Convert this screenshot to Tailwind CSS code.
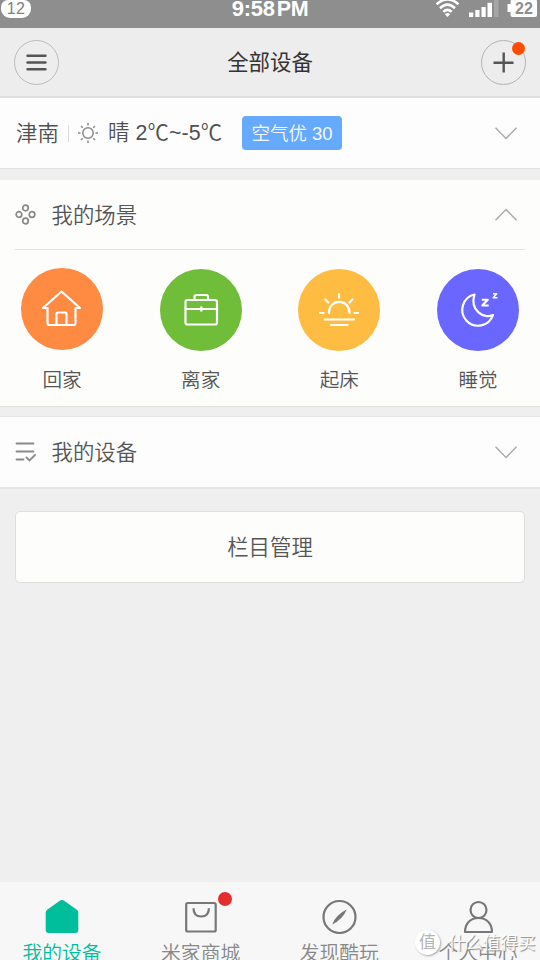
<!DOCTYPE html>
<html lang="zh-CN">
<head>
<meta charset="utf-8">
<title>全部设备</title>
<script src="https://cdn.jsdelivr.net/npm/@tailwindcss/browser@4"></script>
</head>
<body class="h-[960px] w-[540px] overflow-hidden bg-[#efefef] font-['Liberation_Sans','Noto_Sans_CJK_SC',sans-serif] text-[#555]">
<div class="flex h-[960px] flex-col overflow-hidden">
  <div class="relative flex h-7 shrink-0 items-start justify-between bg-[#8e8e8e] text-white">
    <span class="ml-px flex h-[18px] w-[30px] items-center justify-center rounded-b-[9px] rounded-t-[7px] bg-white pb-px text-[16px] leading-none tracking-[0.3px] text-[#808080]">12</span>
    <span class="absolute left-0 top-[-3px] w-full text-center text-[22px] font-bold leading-6"><span class="tracking-[-0.3px]">9:58</span><span class="ml-0.5 text-[21.500px] tracking-[-0.4px]">PM</span></span>
    <svg class="h-7 w-[110px]" viewBox="430 0 110 28" fill="none">
      <g stroke="#fff" stroke-width="2.600"><path d="M436.600 4.200Q447.500-5.400 458.400 4.200M440 8.200Q447.500 1.200 455 8.200M443.300 11.900Q447.500 7.900 451.700 11.900"/></g>
      <path d="M447.500 17l-2.600-2.800q2.600-2.200 5.200 0z" fill="#fff"/>
      <path d="M469 12.500h4.300V17H469zM475.300 10h4.200v7h-4.200zM481.500 7h4.200v10h-4.200zM487.500 2.800h4.500V17h-4.500z" fill="#fff"/>
      <path d="M494 0h4.500v17H494z" fill="#a6a6a6"/>
      <path d="M507.500 4h3V1.500q0-2 2-2H535q2 0 2 2V15q0 2-2 2h-22.500q-2 0-2-2v-3h-3z" fill="#fff"/>
      <text x="524" y="13.700" text-anchor="middle" font-size="16" font-weight="bold" fill="#8e8e8e" font-family="Liberation Sans">22</text>
    </svg>
  </div>

  <header class="flex h-[70px] shrink-0 items-center justify-between border-b-2 border-[#dedee0] bg-[#ededed] px-3.5">
    <div class="flex size-[45px] items-center justify-center rounded-full border border-[#bcbcbc]">
      <svg width="21" height="17" viewBox="0 0 21 17" stroke="#555" stroke-width="2.400" stroke-linecap="round"><path d="M1.500 1.800h18M1.500 8.500h18M1.500 15.200h18"/></svg>
    </div>
    <h1 class="pt-0.5 text-[21.400px] leading-8 text-[#333]">全部设备</h1>
    <div class="relative flex size-[45px] items-center justify-center rounded-full border border-[#b4b4b4]">
      <svg width="21" height="21" viewBox="0 0 21 21" stroke="#555" stroke-width="2.400"><path d="M.5 10.700h20M10.700 .5v20"/></svg>
      <span class="absolute right-0 top-px size-[13px] rounded-full bg-[#ff4d00]"></span>
    </div>
  </header>

  <section class="flex h-[71px] shrink-0 items-center border-b border-[#e0e0e0] bg-[#fdfdfd] px-4 text-[21.400px] text-[#505050]">
    <span class="w-[52px] whitespace-nowrap pt-0.5 font-[350]">津南</span>
    <span class="mr-2 h-[17px] w-px bg-[#dcdcdc]"></span>
    <svg class="mr-[9px]" width="22" height="22" viewBox="-11 -11 22 22" fill="none" stroke="#888" stroke-width="1.500"><circle r="5.200"/><path d="M0-10v2.500M0 10V7.500M-10 0h2.500M10 0H7.500M-7-7l1.700 1.700M7-7L5.300-5.300M-7 7l1.700-1.700M7 7L5.300 5.300"/></svg>
    <span class="w-[134px] whitespace-nowrap pt-px font-[350] tracking-[0.1px]">晴 2℃~-5℃</span>
    <span class="flex h-[34px] w-[100px] items-center justify-center whitespace-nowrap rounded-[4px] bg-[#66aaff] pt-px text-[18.500px] font-[350] text-[#f5f9ff]">空气优 30</span>
    <svg class="ml-auto mr-[7px]" width="22" height="13" viewBox="0 0 22 13" fill="none" stroke="#aaa" stroke-width="1.500"><path d="M.5 .8L11 11.500 21.500 .8"/></svg>
  </section>

  <section class="mt-[11px] h-[227px] shrink-0 border-b border-[#e0e2e2] bg-[#fdfdfc] px-[15px]">
    <div class="flex h-[70px] items-center border-b border-[#e3e3e3]">
      <svg class="mr-[15.500px]" width="21" height="21" viewBox="0 0 21 21" fill="none" stroke="#888" stroke-width="1.700"><circle cx="10.500" cy="4" r="2.800"/><circle cx="4" cy="10.500" r="2.800"/><circle cx="17" cy="10.500" r="2.800"/><circle cx="10.500" cy="17" r="2.800"/></svg>
      <h2 class="pt-[3px] text-[21.400px] font-[350]">我的场景</h2>
      <svg class="ml-auto mr-2" width="22" height="13" viewBox="0 0 22 13" fill="none" stroke="#aaa" stroke-width="1.500"><path d="M.5 12.200L11 1.500 21.500 12.200"/></svg>
    </div>
    <div class="flex justify-between px-1.5 pt-[18px] text-[19.600px] font-[350]">
      <div class="flex w-[82px] flex-col items-center">
        <svg class="size-[82px] rounded-full bg-[#ff8a42]" viewBox="0 0 82 82" fill="none" stroke="#fff" stroke-width="2.200" stroke-linejoin="round"><path d="M26.500 40H22L40.500 23.500 59 40H54.500V55q0 2-2 2h-24q-2 0-2-2zM35.500 57V46q0-1.500 1.500-1.500h7q1.500 0 1.500 1.500v11"/></svg>
        <span class="mt-[15px] leading-[30px]">回家</span>
      </div>
      <div class="flex w-[82px] flex-col items-center pt-px">
        <svg class="size-[82px] rounded-full bg-[#70bd3a]" viewBox="0 0 82 82" fill="none" stroke="#fff" stroke-width="2.200"><rect x="25.500" y="31" width="31.500" height="24.500" rx="2"/><path d="M34.500 31v-3q0-2 2-2h9.500q2 0 2 2v3M25.500 40H57"/><circle cx="41.300" cy="40" r="1.700" fill="#fff" stroke="none"/><path d="M41.300 37.500v5"/></svg>
        <span class="mt-[14px] leading-[30px]">离家</span>
      </div>
      <div class="flex w-[82px] flex-col items-center pt-px">
        <svg class="size-[82px] rounded-full bg-[#ffbc42]" viewBox="0 0 82 82" fill="none" stroke="#fff" stroke-width="2.200" stroke-linecap="round"><path d="M31 44v-1a10.200 10.200 0 0 1 20.400 0v1M22 44h3.500M56.500 44H60M27.300 30.500l3 3M54.500 30.500l-3 3M41 25.200v3.500M26.500 50.500H56M33 56h16.500"/></svg>
        <span class="mt-[14px] leading-[30px]">起床</span>
      </div>
      <div class="flex w-[82px] flex-col items-center pt-px">
        <svg class="size-[82px] rounded-full bg-[#6967ff]" viewBox="0 0 82 82" fill="none" stroke="#fff" stroke-width="2.200" stroke-linejoin="round"><path d="M37.500 25.500A15.800 15.800 0 1 0 56 46C47 50.500 32.500 41.500 37.500 25.500z"/><path d="M44.800 30.700h6L45.200 36.500h6.500" stroke-width="2"/><path d="M56 24.700h3.700l-3.500 4h4.300" stroke-width="1.500"/></svg>
        <span class="mt-[14px] leading-[30px]">睡觉</span>
      </div>
    </div>
  </section>

  <section class="mt-[9px] flex h-[73px] shrink-0 items-center border-b-2 border-t border-[#e5e5e5] bg-[#fdfdfd] px-[15px]">
    <svg class="mr-[15.500px]" width="21" height="20" viewBox="0 0 21 20" fill="none" stroke="#8a8a8a" stroke-width="1.800" stroke-linecap="round"><path d="M1.500 1.500h17M1.500 9.500h17M1.500 17.500h7M11.500 15.500l3 3 5.500-5.500"/></svg>
    <h2 class="pt-[3px] text-[21.400px] font-[350]">我的设备</h2>
    <svg class="ml-auto mr-2" width="22" height="13" viewBox="0 0 22 13" fill="none" stroke="#aaa" stroke-width="1.500"><path d="M.5 .8L11 11.500 21.500 .8"/></svg>
  </section>

  <button class="mx-[15px] mt-[22px] h-[72px] shrink-0 rounded-[5px] border border-[#dedede] bg-[#fdfdfc] pt-0.5 text-[21.400px] font-[350]">栏目管理</button>

  <nav class="relative mt-auto flex h-[78px] shrink-0 justify-between overflow-hidden bg-[#f7f7f7] px-[22px] text-[19.800px] font-[350] text-[#888]">
    <div class="flex w-20 flex-col items-center text-[#00bd9c]">
      <svg class="mt-[17px] shrink-0" width="36" height="36" viewBox="0 0 36 36"><path d="M15.800 1.700q2.200-1.500 4.400 0L32.500 10.500q1.800 1.200 1.800 3.200V31q0 3-3 3H4.700q-3 0-3-3V13.700q0-2 1.800-3.200z" fill="#00bd9c"/></svg>
      <span class="mt-[3px] whitespace-nowrap leading-[30px]">我的设备</span>
    </div>
    <div class="relative flex w-20 flex-col items-center">
      <svg class="mt-[17px] shrink-0" width="36" height="36" viewBox="0 0 36 36" fill="none" stroke="#777" stroke-width="2.200"><rect x="3.200" y="4" width="29.500" height="28.500" rx="1.500"/><path d="M10.500 9.200q0 8.300 7.700 8.300t7.700-8.300"/></svg>
      <span class="mt-[3px] whitespace-nowrap leading-[30px]">米家商城</span>
      <span class="absolute right-[9px] top-[10px] size-[13.500px] rounded-full bg-[#e52d30]"></span>
    </div>
    <div class="flex w-20 flex-col items-center">
      <svg class="mt-[17px] shrink-0" width="36" height="36" viewBox="0 0 36 36" fill="none" stroke="#777" stroke-width="2.200"><circle cx="18.500" cy="18" r="16"/><path d="M25.700 10.500Q24 15 20.500 18.800 15.500 23.800 11.200 25.500 13 20.500 16.500 17 21 12.500 25.700 10.500z" fill="#777" stroke="none"/></svg>
      <span class="mt-[3px] whitespace-nowrap leading-[30px]">发现酷玩</span>
    </div>
    <div class="flex w-20 flex-col items-center">
      <svg class="mt-[17px] shrink-0" width="36" height="36" viewBox="0 0 36 36" fill="none" stroke="#777" stroke-width="2.200" stroke-linejoin="round"><circle cx="18.500" cy="11" r="8"/><path d="M5 33c0-7 4-14 13.500-14s13.500 7 13.500 14z"/></svg>
      <span class="mt-[3px] whitespace-nowrap leading-[30px]">个人中心</span>
    </div>
    <div class="absolute left-[415px] top-[48px] flex items-center font-normal text-white/90">
      <span class="flex size-[25px] items-center justify-center rounded-full bg-white text-[17px] leading-none text-[#b5b5b5] shadow-[1px_1px_2px_#aaa]">值</span>
      <span class="ml-2 whitespace-nowrap text-[17.500px] leading-6 [text-shadow:1px_1px_1px_#888]">什么值得买</span>
    </div>
  </nav>
</div>
</body>
</html>
